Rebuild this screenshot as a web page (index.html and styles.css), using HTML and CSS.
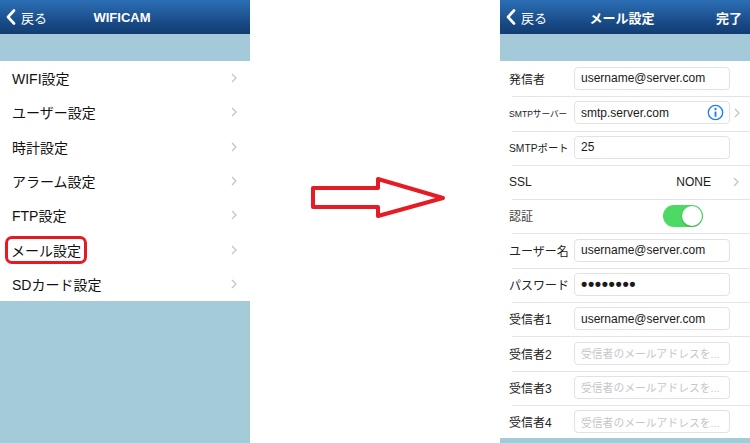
FILE: index.html
```html
<!DOCTYPE html>
<html lang="ja">

<head>
  <meta charset="UTF-8">
  <meta name="viewport" content="width=device-width, initial-scale=1.0">
  <title>WIFICAM メール設定</title>
  <link rel="stylesheet" href="styles.css">
</head>

<body>
  <div class="screen">
    <!-- Settings menu -->
    <section class="phone">
      <header class="navbar">
        <span class="back">
          <svg class="back-icon" viewBox="0 0 10 16"><polyline points="8,1.5 2,8 8,14.5" /></svg>戻る
        </span>
        <h1 class="title">WIFICAM</h1>
        <span></span>
      </header>
      <div class="strip"></div>
      <ul class="menu">
        <li class="menu-item"><span>WIFI設定</span><svg class="chev" viewBox="0 0 6 10"><polyline points="1,1 5,5 1,9" /></svg></li>
        <li class="menu-item"><span>ユーザー設定</span><svg class="chev" viewBox="0 0 6 10"><polyline points="1,1 5,5 1,9" /></svg></li>
        <li class="menu-item"><span>時計設定</span><svg class="chev" viewBox="0 0 6 10"><polyline points="1,1 5,5 1,9" /></svg></li>
        <li class="menu-item"><span>アラーム設定</span><svg class="chev" viewBox="0 0 6 10"><polyline points="1,1 5,5 1,9" /></svg></li>
        <li class="menu-item"><span>FTP設定</span><svg class="chev" viewBox="0 0 6 10"><polyline points="1,1 5,5 1,9" /></svg></li>
        <li class="menu-item"><span class="marked">メール設定</span><svg class="chev" viewBox="0 0 6 10"><polyline points="1,1 5,5 1,9" /></svg></li>
        <li class="menu-item"><span>SDカード設定</span><svg class="chev" viewBox="0 0 6 10"><polyline points="1,1 5,5 1,9" /></svg></li>
      </ul>
    </section>

    <!-- Red arrow -->
    <div class="gap">
      <svg class="arrow" viewBox="0 0 250 443">
        <polygon points="63,188 128,188 128,179 193,198 128,216 128,207 63,207" />
      </svg>
    </div>

    <!-- Mail settings -->
    <section class="phone">
      <header class="navbar">
        <span class="back">
          <svg class="back-icon" viewBox="0 0 10 16"><polyline points="8,1.5 2,8 8,14.5" /></svg>戻る
        </span>
        <h1 class="title">メール設定</h1>
        <span class="done">完了</span>
      </header>
      <div class="strip"></div>
      <div class="form">
        <div class="field">
          <label class="label">発信者</label>
          <div class="input">username@server.com</div>
        </div>
        <div class="field">
          <label class="label label-small">SMTPサーバー</label>
          <div class="input">smtp.server.com
            <svg class="info" viewBox="0 0 18 18">
              <circle cx="9" cy="9" r="7.6" />
              <circle class="dot" cx="9" cy="5.3" r="1.2" />
              <line x1="9" y1="8" x2="9" y2="13.5" />
            </svg>
          </div>
          <svg class="chev chev-field" viewBox="0 0 6 10"><polyline points="1,1 5,5 1,9" /></svg>
        </div>
        <div class="field">
          <label class="label label-mid">SMTPポート</label>
          <div class="input">25</div>
        </div>
        <div class="field">
          <label class="label">SSL</label>
          <span class="value">NONE</span>
          <svg class="chev chev-field" viewBox="0 0 6 10"><polyline points="1,1 5,5 1,9" /></svg>
        </div>
        <div class="field">
          <label class="label label-light">認証</label>
          <span class="toggle"><span class="knob"></span></span>
        </div>
        <div class="field">
          <label class="label">ユーザー名</label>
          <div class="input">username@server.com</div>
        </div>
        <div class="field">
          <label class="label">パスワード</label>
          <div class="input input-secret">••••••••</div>
        </div>
        <div class="field">
          <label class="label">受信者1</label>
          <div class="input">username@server.com</div>
        </div>
        <div class="field">
          <label class="label">受信者2</label>
          <div class="input placeholder">受信者のメールアドレスを...</div>
        </div>
        <div class="field">
          <label class="label">受信者3</label>
          <div class="input placeholder">受信者のメールアドレスを...</div>
        </div>
        <div class="field">
          <label class="label">受信者4</label>
          <div class="input placeholder">受信者のメールアドレスを...</div>
        </div>
      </div>
    </section>
  </div>
</body>

</html>
```

FILE: styles.css
```css
body {
  margin: 0;
  font-family: "Liberation Sans", "Noto Sans CJK JP", sans-serif;
  background-color: #ffffff;
  color: #1a1a1a;
}

.screen {
  display: flex;
  width: 750px;
  height: 443px;
  overflow: hidden;
}

.phone {
  width: 250px;
  display: flex;
  flex-direction: column;
  background-color: #a3cbd8;
}

.navbar {
  height: 34px;
  display: grid;
  grid-template-columns: 1fr auto 1fr;
  align-items: center;
  padding: 0 8px 0 6px;
  background: linear-gradient(to bottom, #2c6fb6, #164680 75%, #123d72);
  color: white;
}

.back {
  display: flex;
  align-items: center;
  gap: 5px;
  font-size: 13px;
}

.back-icon {
  width: 10px;
  height: 16px;
  fill: none;
  stroke: white;
  stroke-width: 2.6;
  stroke-linecap: round;
  stroke-linejoin: round;
}

.title {
  margin: 0;
  font-size: 13px;
  font-weight: bold;
  padding-right: 4px;
}

.done {
  justify-self: end;
  font-size: 13px;
  font-weight: bold;
}

.strip {
  height: 27px;
  background-color: #a4cad9;
}

.menu {
  list-style: none;
  margin: 0;
  padding: 0;
  background-color: white;
}

.menu-item {
  height: 34.3px;
  display: flex;
  align-items: center;
  justify-content: space-between;
  padding: 0 13px 0 12px;
  font-size: 14px;
  color: #111;
}

.chev {
  width: 6px;
  height: 10px;
  fill: none;
  stroke: #c4c4c8;
  stroke-width: 1.3;
}

.marked {
  margin-left: -7px;
  padding: 1px 3px;
  border: 3px solid #e41b23;
  border-radius: 7px;
}

.gap {
  width: 250px;
  background-color: white;
}

.arrow {
  width: 250px;
  height: 443px;
  fill: white;
  stroke: #e51c24;
  stroke-width: 4;
  stroke-linejoin: round;
}

.form {
  background-color: white;
}

.field {
  position: relative;
  height: 34.3px;
  display: flex;
  align-items: center;
  padding-left: 9px;
  box-sizing: border-box;
}

.field + .field {
  border-top: 1px solid transparent;
}

.field + .field::before {
  content: "";
  position: absolute;
  top: 0;
  left: 12px;
  right: 0;
  border-top: 1px solid #e4e4e6;
}

.label {
  width: 65px;
  flex-shrink: 0;
  font-size: 12px;
  color: #222;
  white-space: nowrap;
}

.label-small {
  font-size: 8.6px;
}

.label-mid {
  font-size: 10.3px;
}

.label-light {
  color: #444;
}

.input {
  width: 156px;
  height: 23px;
  box-sizing: border-box;
  display: flex;
  align-items: center;
  justify-content: space-between;
  padding: 0 6px;
  border: 1px solid #e2e2e4;
  border-radius: 4px;
  font-size: 12px;
  color: #1a1a1a;
}

.input-secret {
  justify-content: flex-start;
  font-size: 18px;
  font-weight: bold;
  letter-spacing: 0.6px;
}

.placeholder {
  font-size: 10.8px;
  color: #c6c6ca;
}

.info {
  width: 17px;
  height: 17px;
  margin-right: -1px;
  fill: none;
  stroke: #1b7cf3;
  stroke-width: 1.4;
}

.info .dot {
  fill: #1b7cf3;
  stroke: none;
}

.info line {
  stroke-width: 2;
}

.chev-field {
  margin-left: 4px;
}

.value {
  margin-left: auto;
  margin-right: 18px;
  font-size: 12px;
  color: #1a1a1a;
}

.value + .chev-field {
  margin-right: 11px;
}

.toggle {
  margin-left: 89px;
  width: 40px;
  height: 22px;
  box-sizing: border-box;
  padding: 1px;
  display: flex;
  justify-content: flex-end;
  border-radius: 11px;
  background-color: #4cd964;
}

.knob {
  width: 20px;
  height: 20px;
  border-radius: 50%;
  background-color: white;
  box-shadow: 0 1px 2px rgba(0, 0, 0, 0.25);
}
```
